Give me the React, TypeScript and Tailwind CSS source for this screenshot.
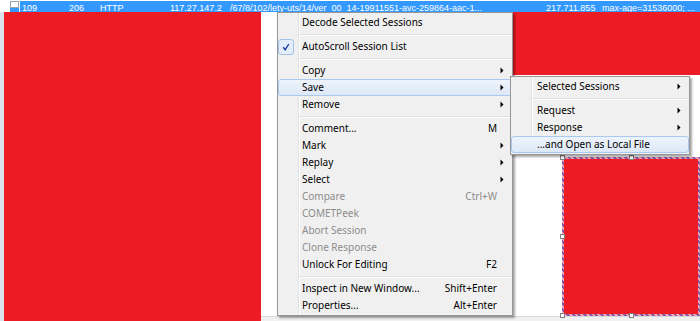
import clsx from 'clsx'

type Item = {
  label: string
  shortcut?: string
  sub?: boolean
  disabled?: boolean
  active?: boolean
  checked?: boolean
} | null

const MAIN: Item[] = [
  { label: 'Decode Selected Sessions' },
  null,
  { label: 'AutoScroll Session List', checked: true },
  null,
  { label: 'Copy', sub: true },
  { label: 'Save', sub: true, active: true },
  { label: 'Remove', sub: true },
  null,
  { label: 'Comment...', shortcut: 'M' },
  { label: 'Mark', sub: true },
  { label: 'Replay', sub: true },
  { label: 'Select', sub: true },
  { label: 'Compare', shortcut: 'Ctrl+W', disabled: true },
  { label: 'COMETPeek', disabled: true },
  { label: 'Abort Session', disabled: true },
  { label: 'Clone Response', disabled: true },
  { label: 'Unlock For Editing', shortcut: 'F2' },
  null,
  { label: 'Inspect in New Window...', shortcut: 'Shift+Enter' },
  { label: 'Properties...', shortcut: 'Alt+Enter' },
]

const SAVE: Item[] = [
  { label: 'Selected Sessions', sub: true },
  null,
  { label: 'Request', sub: true },
  { label: 'Response', sub: true },
  { label: '...and Open as Local File', active: true },
]

function Arrow() {
  return (
    <svg width="4" height="7" viewBox="0 0 4 7" className="mr-[7px]">
      <polygon points="0.5,0.5 3.5,3.5 0.5,6.5" fill="#000" />
    </svg>
  )
}

function CheckBox() {
  return (
    <div className="-ml-px flex h-[16px] w-[16px] items-center justify-center rounded-[3px] border border-[#a4c2e8] bg-[#e3edfa]">
      <svg width="10" height="10" viewBox="0 0 10 10">
        <path d="M2.2 5.3 L4.2 7.8 L7.8 2" stroke="#1c3a9e" strokeWidth="1.4" fill="none" />
      </svg>
    </div>
  )
}

function Separator() {
  return (
    <div className="flex h-[7px] flex-col justify-center pl-[21px]">
      <div className="h-px bg-[#e0e0e0]" />
      <div className="h-px bg-white" />
    </div>
  )
}

function Menu({ items, wide }: { items: Item[]; wide?: boolean }) {
  return (
    <div className="border border-[#979797] bg-[#f0f0f0] bg-[linear-gradient(to_right,#f0f0f0_20px,#e2e3e3_20px,#e2e3e3_21px,#ffffff_21px,#ffffff_22px,#f0f0f0_22px)] py-[1px] font-['Noto_Sans',sans-serif] text-[10px] text-black shadow-[2px_2px_2px_rgba(0,0,0,0.35)]">
      {items.map((item, i) =>
        item === null ? (
          <Separator key={i} />
        ) : (
          <div
            key={i}
            className={clsx(
              'flex h-[17px] items-center rounded-[3px] border',
              item.active
                ? 'border-[#abc9ef] bg-gradient-to-b from-[#eef4fc] to-[#dde8f7]'
                : 'border-transparent',
              item.disabled && 'text-[#8d8d8d]',
            )}
          >
            <div className={clsx('flex shrink-0', wide ? 'w-[25px]' : 'w-[23px]')}>
              {item.checked && <CheckBox />}
            </div>
            <span className="flex-1 whitespace-nowrap">{item.label}</span>
            {item.shortcut && <span className="mr-[14px] whitespace-nowrap">{item.shortcut}</span>}
            {item.sub && <Arrow />}
          </div>
        ),
      )}
    </div>
  )
}

export default function App() {
  return (
    <div className="relative flex h-[321px] w-[700px] flex-col overflow-hidden bg-white">
      {/* selected session row */}
      <div className="flex h-[12px] shrink-0">
        <div className="flex w-[20px] pl-[10px] pt-[1px]">
          <div className="flex h-[11px] w-[9px] flex-col">
            <div className="h-[7px] border border-[#9aa3ad] bg-white" />
            <div className="flex-1 bg-[#3399ff]" />
          </div>
        </div>
        <div className="mt-[1px] flex h-[11px] flex-1 overflow-hidden whitespace-nowrap bg-[#3399ff] pl-[2px] pt-[2px] font-['Liberation_Sans',sans-serif] text-[9px] leading-[11px] text-white">
          <span className="w-[47px] shrink-0">109</span>
          <span className="w-[31px] shrink-0">206</span>
          <span className="w-[70px] shrink-0">HTTP</span>
          <span className="w-[60px] shrink-0">117.27.147.2</span>
          <span className="w-[316px] shrink-0 overflow-hidden">/67/8/102/lety-uts/14/ver_00_14-19911551-avc-259864-aac-1...</span>
          <span className="w-[56px] shrink-0">217.711.855</span>
          <span className="shrink-0">max-age=31536000; ...</span>
        </div>
      </div>

      {/* body */}
      <div className="flex min-h-0 flex-1">
        <div className="w-[4px] bg-[#dce2eb]" />
        <div className="w-[273px] bg-[#ed1c24]" />
        <div className="flex flex-1 flex-col">
          <div className="flex h-[63px] shrink-0">
            <div className="w-[238px]" />
            <div className="flex-1 bg-[#ed1c24]" />
          </div>
          <div className="flex-1 pl-[301px] pt-[82px]">
            <div className="relative h-[159px] w-[138px] border-2 border-solid [border-image:repeating-linear-gradient(45deg,#7d5ca8_0_2px,#f6a2b5_2px_4px)_2]">
              <div className="h-full bg-[#ed1c24]" />
              <div className="absolute left-[-4px] top-[-4px] h-[5px] w-[5px] border border-[#7f7f7f] bg-white" />
              <div className="absolute left-[65px] top-[-4px] h-[5px] w-[5px] border border-[#7f7f7f] bg-white" />
              <div className="absolute left-[-4px] top-[75px] h-[5px] w-[5px] border border-[#7f7f7f] bg-white" />
              <div className="absolute bottom-[-4px] left-[-4px] h-[5px] w-[5px] border border-[#7f7f7f] bg-white" />
              <div className="absolute bottom-[-4px] left-[65px] h-[5px] w-[5px] border border-[#7f7f7f] bg-white" />
            </div>
          </div>
          <div className="h-[5px] shrink-0 border-t border-[#d9d9d9] bg-[#f0f0f0]" />
        </div>
      </div>

      {/* context menu */}
      <div className="absolute left-[277px] top-[12px] w-[236px]">
        <Menu items={MAIN} />
      </div>
      <div className="absolute left-[510px] top-[76px] w-[180px]">
        <Menu items={SAVE} wide />
      </div>
    </div>
  )
}
